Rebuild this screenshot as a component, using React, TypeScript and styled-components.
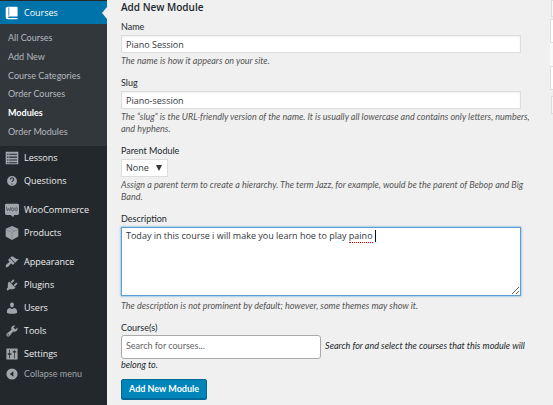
import React from "react";
import styled, { createGlobalStyle, css } from "styled-components";

const narrow = `Lato, "Open Sans", sans-serif`;
const wide = `"Open Sans", "Noto Sans", sans-serif`;

const GlobalStyle = createGlobalStyle`
  * { box-sizing: border-box; }
  html, body { margin: 0; background: #f0f0f0; }
  body, input, select, textarea, button {
    font-family: ${wide};
    font-size: 9px;
    line-height: 12px;
  }
  body { overflow: hidden; color: #23282d; }
`;

const Page = styled.div`
  display: flex;
  min-height: 100vh;
`;

const Sidebar = styled.nav`
  flex: 0 0 107px;
  padding-top: 1px;
  background: #23282d;
`;

const MenuLink = styled.a<{ $active?: boolean }>`
  position: relative;
  display: flex;
  align-items: center;
  gap: 5px;
  height: 23px;
  padding-left: 5px;
  color: #eee;
  text-decoration: none;
  white-space: nowrap;
  svg { flex: none; fill: #a0a5aa; }
  ${(p) => p.$active && css`
    background: #0073aa;
    color: #fff;
    svg { fill: #fff; }
    &::after {
      content: "";
      position: absolute;
      right: 0;
      top: 6px;
      border: 6px solid transparent;
      border-left: 0;
      border-right: 5px solid #f0f0f0;
    }
  `}
`;

const MenuGroup = styled.div`
  margin-bottom: 6px;
`;

const Submenu = styled.div`
  display: flex;
  flex-direction: column;
  min-height: 122px;
  padding: 5px 8px;
  background: #32373c;
`;

const SubLink = styled.a<{ $current?: boolean }>`
  display: flex;
  flex: 1;
  align-items: center;
  color: ${(p) => (p.$current ? "#fff" : "#b4b9be")};
  font-family: ${narrow};
  font-weight: ${(p) => (p.$current ? 700 : 400)};
  text-decoration: none;
  white-space: nowrap;
`;

const Collapse = styled.button`
  display: flex;
  align-items: center;
  gap: 5px;
  height: 18px;
  margin-top: -6px;
  padding: 0 0 0 5px;
  border: 0;
  background: none;
  color: #a0a5aa;
  font-family: ${narrow};
  white-space: nowrap;
  svg { flex: none; fill: #a0a5aa; }
`;

const Main = styled.main`
  flex: 1;
  min-width: 0;
  padding: 0 8px 0 14px;
`;

const Title = styled.h2`
  margin: 0 0 7px;
  font-size: 10px;
  font-weight: 600;
  line-height: 14px;
`;

const Field = styled.div`
  margin-bottom: 10px;
`;

const Label = styled.label`
  display: block;
  margin-bottom: 2px;
  font-family: ${narrow};
`;

const Hint = styled.p`
  margin: 2px 0 0;
  color: #555;
  font-family: ${narrow};
  font-style: italic;
`;

const control = css`
  border: 1px solid #ddd;
  background: #fff;
  color: #32373c;
  outline: 0;
`;

const TextInput = styled.input`
  ${control}
  display: block;
  width: 95%;
  height: 18px;
  padding: 0 4px;
  box-shadow: inset 0 1px 2px rgba(0, 0, 0, 0.07);
`;

const SelectWrap = styled.div`
  position: relative;
  width: max-content;
  svg { position: absolute; right: 6px; top: 6px; pointer-events: none; fill: #32373c; }
`;

const Select = styled.select`
  ${control}
  display: block;
  width: 47px;
  height: 18px;
  padding: 0 4px;
  appearance: none;
  border-radius: 0;
`;

const AreaWrap = styled.div`
  position: relative;
  width: 95%;
  margin-bottom: 4px;
`;

const TextArea = styled.textarea`
  ${control}
  display: block;
  width: 100%;
  height: 69px;
  padding: 2px 4px;
  border-color: #5b9dd9;
  box-shadow: 0 0 2px rgba(30, 140, 190, 0.8);
  resize: vertical;
`;

const SpellLayer = styled.div`
  position: absolute;
  inset: 0;
  padding: 3px 5px;
  color: transparent;
  white-space: pre-wrap;
  pointer-events: none;
`;

const Misspelled = styled.span`
  border-bottom: 1px dotted #e00;
`;

const Caret = styled.span`
  display: inline-block;
  width: 1px;
  height: 12px;
  background: #111;
  vertical-align: top;
`;

const CourseLabel = styled(Label)`
  margin-bottom: 1px;
`;

const CourseLine = styled.div`
  margin-bottom: 8px;
  font-family: ${narrow};
  font-style: italic;
`;

const CourseInput = styled.input`
  ${control}
  width: 200px;
  height: 24px;
  margin-right: 2px;
  padding: 0 4px 4px;
  border-color: #aaa;
  border-radius: 3px;
  font-family: ${narrow};
  vertical-align: middle;
  &::placeholder { color: #666; opacity: 1; }
`;

const Submit = styled.button`
  height: 20px;
  padding: 0 7px;
  border: 1px solid #006799;
  border-radius: 2px;
  background: #0085ba;
  color: #fff;
  font-family: ${narrow};
  font-weight: 700;
  box-shadow: 0 1px 0 #006799;
`;

const TableEdge = styled.aside`
  flex: 0 0 3px;
  overflow: hidden;
`;

const EdgeBox = styled.div<{ $h: number; $gap: number; $row?: boolean; $alt?: boolean }>`
  height: ${(p) => p.$h}px;
  margin-bottom: ${(p) => p.$gap}px;
  margin-left: ${(p) => (p.$row ? 0 : 1)}px;
  border: 1px solid #ddd;
  border-right: 0;
  background: ${(p) => (p.$row ? "#fff" : "#f7f7f7")};
  ${(p) => p.$alt && css`
    background: #f9f9f9;
    border: 0;
  `}
`;

const icons = {
  book: <path fillRule="evenodd" d="M4 1h13q1 0 1 1v13H5q-1 1 0 2h13v2H4q-3 0-3-3V4q0-3 3-3zm1 1v12h1V2z" />,
  list: <path fillRule="evenodd" d="M1 1h18v18H1zM3 4v1.500h2V4zm3 0v1.500h11V4zM3 8v1.500h2V8zm3 0v1.500h11V8zm-3 4v1.500h2V12zm3 0v1.500h11V12zm-3 4v1.500h2V16zm3 0v1.500h11V16z" />,
  question: (
    <>
      <circle cx="10" cy="10" r="7" />
      <path d="M7.500 8c0-3.500 5-3.500 5-.500 0 2-2.500 2-2.500 4M10 13.500v1.500" fill="none" stroke="#23282d" strokeWidth="1.500" />
    </>
  ),
  woo: (
    <>
      <path d="M2 1h16q2 0 2 2v12q0 2-2 2h-5l-1 3-4-3H2q-2 0-2-2V3q0-2 2-2z" />
      <path d="M2 6l1.500 5L5 8l2 3 1-5" fill="none" stroke="#50565c" strokeWidth="1.300" />
      <ellipse cx="11" cy="9" rx="1.700" ry="2.300" fill="none" stroke="#50565c" strokeWidth="1.300" />
      <ellipse cx="16" cy="9" rx="1.700" ry="2.300" fill="none" stroke="#50565c" strokeWidth="1.300" />
    </>
  ),
  box: (
    <>
      <path d="M10 0l9 4v11l-9 5-9-5V4z" />
      <path d="M1.500 5L10 9l8.500-4M10 9v10M5.500 2.500L14 7" fill="none" stroke="#7b8187" strokeWidth="1" />
    </>
  ),
  brush: <path d="M14.480 11.060L7.410 3.990l1.500-1.500c.5-.560 2.300-.470 3.510.320 1.210.8 1.430 1.280 2.910 2.100 1.180.640 2.450 1.260 4.450.850zm-.710.710L6.700 4.700 4.930 6.470c-.390.390-.390 1.020 0 1.410l1.060 1.060c.390.390.390 1.030 0 1.420-.6.6-1.430 1.110-2.210 1.690-.350.260-.7.530-1.010.840C1.430 14.230.4 16.080 1.400 17.070c.990 1 2.840-.030 4.180-1.360.310-.310.580-.660.850-1.020.570-.780 1.080-1.610 1.690-2.210.390-.390 1.020-.390 1.410 0l1.060 1.060c.390.390 1.020.390 1.410 0z" />,
  plug: <path d="M13.110 4.360L9.870 7.600 8 5.730l3.240-3.240c.350-.340 1.050-.2 1.560.320.520.510.660 1.210.310 1.550zm-8 1.770l.910-1.120 9.010 9.010-1.190.840c-.710.710-2.630 1.160-3.820 1.160H6.140L4.900 17.260c-.590.590-1.540.590-2.120 0-.590-.580-.590-1.530 0-2.120l1.240-1.240v-3.880c0-1.130.4-3.190 1.090-3.890zm7.260 3.970l3.240-3.240c.340-.350 1.040-.210 1.550.310.520.510.660 1.210.310 1.550l-3.240 3.250z" />,
  user: <path d="M10 9.250c-2.270 0-2.730-3.440-2.730-3.440C7 4.020 7.820 2 9.970 2c2.160 0 2.980 2.020 2.710 3.810 0 0-.410 3.440-2.680 3.440zm0 2.570L12.720 10c2.390 0 4.520 2.330 4.520 4.530v2.490s-3.650 1.130-7.240 1.130c-3.650 0-7.240-1.130-7.240-1.130v-2.490c0-2.250 1.940-4.480 4.470-4.480z" />,
  wrench: <path d="M16.680 9.770c-1.340 1.340-3.300 1.670-4.950.990l-5.410 6.520c-.990.990-2.590.990-3.580 0s-.990-2.590 0-3.570l6.520-5.420c-.680-1.650-.350-3.610.990-4.950 1.280-1.280 3.120-1.620 4.720-1.060l-2.890 2.890 2.820 2.820 2.860-2.870c.530 1.580.180 3.390-1.080 4.650zM3.810 16.210c.4.390 1.040.390 1.430 0 .4-.4.4-1.040 0-1.430-.390-.4-1.030-.4-1.430 0-.390.390-.390 1.030 0 1.430z" />,
  sliders: <path fillRule="evenodd" d="M18 2v16H2V2zM6 4v5H4v2h2v5h1v-5h2V9H7V4zm7 0v2h-2v2h2v8h1V8h2V6h-2V4z" />,
  collapse: <path fillRule="evenodd" d="M10 2a8 8 0 1 1 0 16 8 8 0 0 1 0-16zm2 4l-5 4 5 4z" />,
};

function Icon({ name }: { name: keyof typeof icons }) {
  return (
    <svg width="14" height="14" viewBox="0 0 20 20" aria-hidden="true">
      {icons[name]}
    </svg>
  );
}

type Item = [keyof typeof icons, string];
const groups: Item[][] = [
  [["list", "Lessons"], ["question", "Questions"]],
  [["woo", "WooCommerce"], ["box", "Products"]],
  [["brush", "Appearance"], ["plug", "Plugins"], ["user", "Users"], ["wrench", "Tools"], ["sliders", "Settings"]],
];
const subItems = ["All Courses", "Add New", "Course Categories", "Order Courses", "Modules", "Order Modules"];

export default function App() {
  return (
    <Page>
      <GlobalStyle />
      <Sidebar>
        <MenuLink href="#" $active><Icon name="book" />Courses</MenuLink>
        <Submenu>
          {subItems.map((s) => (
            <SubLink key={s} href="#" $current={s === "Modules"}>{s}</SubLink>
          ))}
        </Submenu>
        {groups.map((g, i) => (
          <MenuGroup key={i}>
            {g.map(([icon, text]) => (
              <MenuLink key={text} href="#"><Icon name={icon} />{text}</MenuLink>
            ))}
          </MenuGroup>
        ))}
        <Collapse type="button"><Icon name="collapse" />Collapse menu</Collapse>
      </Sidebar>
      <Main>
        <Title>Add New Module</Title>
        <form>
          <Field>
            <Label htmlFor="name">Name</Label>
            <TextInput id="name" defaultValue="Piano Session" />
            <Hint>The name is how it appears on your site.</Hint>
          </Field>
          <Field>
            <Label htmlFor="slug">Slug</Label>
            <TextInput id="slug" defaultValue="Piano-session" />
            <Hint>The “slug” is the URL-friendly version of the name. It is usually all lowercase and contains only letters, numbers, and hyphens.</Hint>
          </Field>
          <Field>
            <Label htmlFor="parent">Parent Module</Label>
            <SelectWrap>
              <Select id="parent"><option>None</option></Select>
              <svg width="6" height="6" viewBox="0 0 6 6" aria-hidden="true"><path d="M0 0h6L3 6z" /></svg>
            </SelectWrap>
            <Hint>Assign a parent term to create a hierarchy. The term Jazz, for example, would be the parent of Bebop and Big Band.</Hint>
          </Field>
          <Field>
            <Label htmlFor="description">Description</Label>
            <AreaWrap>
              <TextArea id="description" spellCheck={false} defaultValue="Today in this course i will make you learn hoe to play paino " />
              <SpellLayer aria-hidden="true">
                Today in this course i will make you learn hoe to play <Misspelled>paino</Misspelled> <Caret />
              </SpellLayer>
            </AreaWrap>
            <Hint>The description is not prominent by default; however, some themes may show it.</Hint>
          </Field>
          <CourseLabel htmlFor="courses">Course(s)</CourseLabel>
          <CourseLine>
            <CourseInput id="courses" placeholder="Search for courses..." /> Search for and select the courses that this module will belong to.
          </CourseLine>
          <Submit type="button">Add New Module</Submit>
        </form>
      </Main>
      <TableEdge>
        <EdgeBox $h={17} $gap={2} />
        <EdgeBox $h={24} $gap={0} $row />
        <EdgeBox $h={23} $gap={0} $row $alt />
        <EdgeBox $h={24} $gap={6} $row />
        <EdgeBox $h={18} $gap={0} />
      </TableEdge>
    </Page>
  );
}
